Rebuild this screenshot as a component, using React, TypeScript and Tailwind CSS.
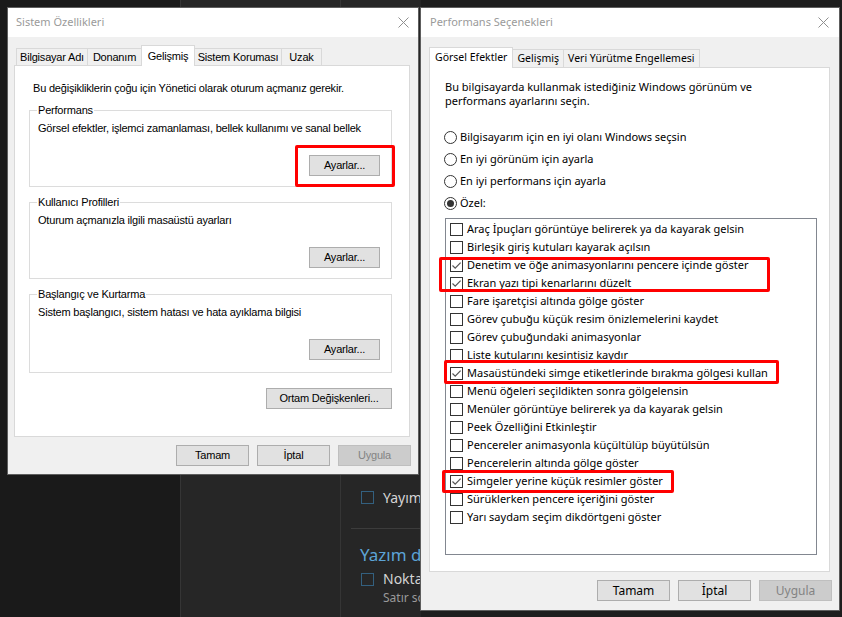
import React from 'react';

const seg = "font-['Noto_Sans',sans-serif]";
const ms = "font-['Liberation_Sans',Arial,sans-serif]";

const visualItems = [
  { label: 'Araç İpuçları görüntüye belirerek ya da kayarak gelsin', on: false },
  { label: 'Birleşik giriş kutuları kayarak açılsın', on: false },
  { label: 'Denetim ve öğe animasyonlarını pencere içinde göster', on: true },
  { label: 'Ekran yazı tipi kenarlarını düzelt', on: true },
  { label: 'Fare işaretçisi altında gölge göster', on: false },
  { label: 'Görev çubuğu küçük resim önizlemelerini kaydet', on: false },
  { label: 'Görev çubuğundaki animasyonlar', on: false },
  { label: 'Liste kutularını kesintisiz kaydır', on: false },
  { label: 'Masaüstündeki simge etiketlerinde bırakma gölgesi kullan', on: true },
  { label: 'Menü öğeleri seçildikten sonra gölgelensin', on: false },
  { label: 'Menüler görüntüye belirerek ya da kayarak gelsin', on: false },
  { label: 'Peek Özelliğini Etkinleştir', on: false },
  { label: 'Pencereler animasyonla küçültülüp büyütülsün', on: false },
  { label: 'Pencerelerin altında gölge göster', on: false },
  { label: 'Simgeler yerine küçük resimler göster', on: true },
  { label: 'Sürüklerken pencere içeriğini göster', on: false },
  { label: 'Yarı saydam seçim dikdörtgeni göster', on: false },
];

const radios = [
  { label: 'Bilgisayarım için en iyi olanı Windows seçsin', on: false },
  { label: 'En iyi görünüm için ayarla', on: false },
  { label: 'En iyi performans için ayarla', on: false },
  { label: 'Özel:', on: true },
];

function CloseX() {
  return (
    <svg width="11" height="11" viewBox="0 0 11 11">
      <path d="M0.5 0.5L10.5 10.5M10.5 0.5L0.5 10.5" stroke="#8f8f8f" strokeWidth="1" />
    </svg>
  );
}

function TitleBar({ title, className }: { title: string; className: string }) {
  return (
    <div className={`flex h-[29px] items-center justify-between bg-white ${className}`}>
      <span className={`${seg} text-[11px] text-[#9a9a9a]`}>{title}</span>
      <CloseX />
    </div>
  );
}

function Btn({ children, disabled, className = '' }: { children: React.ReactNode; disabled?: boolean; className?: string }) {
  return (
    <div
      className={`flex h-[21px] items-center justify-center whitespace-nowrap border ${
        disabled ? 'border-[#bfbfbf] bg-[#cccccc] text-[#838383]' : 'border-[#adadad] bg-[#e1e1e1] text-black'
      } ${className}`}
    >
      {children}
    </div>
  );
}

function Tab({ label, active, className }: { label: string; active?: boolean; className: string }) {
  return (
    <div
      className={`-ml-px flex items-center justify-center whitespace-nowrap border border-b-0 border-[#d9d9d9] first:ml-0 ${
        active ? 'relative z-10 -mb-px bg-white' : 'bg-[#f0f0f0]'
      } ${className}`}
    >
      {label}
    </div>
  );
}

function Group({ legend, desc, h }: { legend: string; desc: string; h: string }) {
  return (
    <div className={`relative flex flex-col border border-[#dcdcdc] ${h}`}>
      <span className="absolute -top-[7px] left-[7px] bg-white px-px leading-[13px]">{legend}</span>
      <div className="pl-[8px] pt-[11px] leading-[13px]">{desc}</div>
      <Btn className="mr-[11px] mt-[20px] w-[71px] self-end">Ayarlar...</Btn>
    </div>
  );
}

function SystemProperties() {
  return (
    <div className="absolute left-[8px] top-[8px] flex h-[466px] w-[410px] flex-col bg-[#f0f0f0] ring-1 ring-[#5e5e5e]">
      <TitleBar title="Sistem Özellikleri" className="pl-[8px] pr-[9px]" />
      <div className={`${ms} text-[11px] tracking-[-0.2px] text-black`}>
        <div className="ml-[6px] mr-[8px] mt-[8px]">
          <div className="flex h-[20px] items-end pl-[2px]">
            <Tab label="Bilgisayar Adı" className="h-[17px] w-[72px]" />
            <Tab label="Donanım" className="h-[17px] w-[55px]" />
            <Tab label="Gelişmiş" active className="h-[21px] w-[54px]" />
            <Tab label="Sistem Koruması" className="h-[17px] w-[88px]" />
            <Tab label="Uzak" className="h-[17px] w-[41px]" />
          </div>
          <div className="flex h-[372px] flex-col border border-[#d9d9d9] bg-white">
            <div className="pl-[18px] pt-[16px] leading-[13px]">
              Bu değişikliklerin çoğu için Yönetici olarak oturum açmanız gerekir.
            </div>
            <div className="ml-[14px] mr-[17px] mt-[15px] flex flex-col gap-[15px]">
              <Group h="h-[77px]" legend="Performans" desc="Görsel efektler, işlemci zamanlaması, bellek kullanımı ve sanal bellek" />
              <Group h="h-[77px]" legend="Kullanıcı Profilleri" desc="Oturum açmanızla ilgili masaüstü ayarları" />
              <Group h="h-[79px]" legend="Başlangıç ve Kurtarma" desc="Sistem başlangıcı, sistem hatası ve hata ayıklama bilgisi" />
              <Btn className="w-[126px] self-end">Ortam Değişkenleri...</Btn>
            </div>
          </div>
        </div>
        <div className="mt-[8px] flex justify-end gap-[8px] pr-[7px]">
          <Btn className="w-[73px]">Tamam</Btn>
          <Btn className="w-[73px]">İptal</Btn>
          <Btn disabled className="w-[73px]">Uygula</Btn>
        </div>
      </div>
    </div>
  );
}

function Radio({ on }: { on: boolean }) {
  return (
    <div className="flex h-[13px] w-[13px] shrink-0 items-center justify-center rounded-full border border-[#333333] bg-white">
      {on && <div className="h-[7px] w-[7px] rounded-full bg-[#333333]" />}
    </div>
  );
}

function Check({ on }: { on: boolean }) {
  return (
    <div className="flex h-[13px] w-[13px] shrink-0 items-center justify-center border border-[#333333] bg-white">
      {on && (
        <svg width="11" height="11" viewBox="0 0 11 11">
          <path d="M1.5 5.5L4.2 8.2L9.6 2.6" fill="none" stroke="#555555" strokeWidth="1.2" />
        </svg>
      )}
    </div>
  );
}

function PerformanceOptions() {
  return (
    <div className="absolute left-[421px] top-[8px] flex h-[602px] w-[418px] flex-col bg-[#f0f0f0] ring-1 ring-[#5e5e5e]">
      <TitleBar title="Performans Seçenekleri" className="pl-[9px] pr-[10px]" />
      <div className={`${seg} text-[11px] text-black`}>
        <div className="ml-[8px] mr-[9px] mt-[10px]">
          <div className="flex h-[20px] items-end text-[10.5px]">
            <Tab label="Görsel Efektler" active className="h-[21px] px-[5px]" />
            <Tab label="Gelişmiş" className="h-[18px] px-[4px]" />
            <Tab label="Veri Yürütme Engellemesi" className="h-[18px] px-[4px]" />
          </div>
          <div className="flex h-[505px] flex-col border border-[#d9d9d9] bg-white">
            <div className="pl-[15px] pt-[12px] leading-[14px]">
              Bu bilgisayarda kullanmak istediğiniz Windows görünüm ve
              <br />
              performans ayarlarını seçin.
            </div>
            <div className="mt-[18px] flex flex-col pl-[14px]">
              {radios.map((r) => (
                <div key={r.label} className="flex h-[22px] items-center gap-[3px]">
                  <Radio on={r.on} />
                  <span>{r.label}</span>
                </div>
              ))}
            </div>
            <div className="ml-[15px] mr-[12px] mt-[4px] h-[337px] border border-[#828790] bg-white pl-[4px] pt-px">
              {visualItems.map((it) => (
                <div key={it.label} className="flex h-[18px] items-center gap-[4px]">
                  <Check on={it.on} />
                  <span>{it.label}</span>
                </div>
              ))}
            </div>
          </div>
        </div>
        <div className="mt-[8px] flex justify-end gap-[8px] pr-[7px] text-[12px]">
          <Btn className="w-[73px]">Tamam</Btn>
          <Btn className="w-[73px]">İptal</Btn>
          <Btn disabled className="w-[73px]">Uygula</Btn>
        </div>
      </div>
    </div>
  );
}

function DarkCheck() {
  return <div className="h-[13px] w-[13px] shrink-0 border-[1.5px] border-[#33607f]" />;
}

function Backdrop() {
  return (
    <div className={`${seg} flex h-full w-full`}>
      <div className="w-[180px] bg-[#1a1a1a]" />
      <div className="w-[160px] border-l border-[#353535] bg-[#262626]" />
      <div className="flex w-[81px] flex-col border-l border-[#353535] bg-[#262626] pt-[487px]">
        <div className="flex items-center gap-[9px] pl-[20px]">
          <DarkCheck />
          <span className="whitespace-nowrap text-[14px] text-[#d4d4d4]">Yayım</span>
        </div>
        <div className="ml-[10px] mt-[20px] border-t border-[#3c3c3c]" />
        <div className="mt-[14px] whitespace-nowrap pl-[19px] text-[17px] leading-[24px] text-[#5ca3d6]">Yazım de</div>
        <div className="mt-[2px] flex items-center gap-[9px] pl-[20px]">
          <DarkCheck />
          <span className="whitespace-nowrap text-[14px] leading-[20px] text-[#d4d4d4]">Nokta</span>
        </div>
        <div className="whitespace-nowrap pl-[42px] text-[12px] leading-[18px] text-[#9a9a9a]">Satır so</div>
      </div>
      <div className="flex-1 bg-[#1e1e1e]" />
    </div>
  );
}

export default function App() {
  return (
    <div className="relative h-[617px] w-[842px] overflow-hidden bg-[#1a1a1a]">
      <Backdrop />
      <SystemProperties />
      <PerformanceOptions />
      <div className="absolute left-[295px] top-[145px] h-[42px] w-[100px] rounded-[2px] border-[3px] border-[#ff0000]" />
      <div className="absolute left-[439px] top-[257px] h-[35px] w-[331px] rounded-[2px] border-[3px] border-[#ff0000]" />
      <div className="absolute left-[444px] top-[360px] h-[24px] w-[335px] rounded-[2px] border-[3px] border-[#ff0000]" />
      <div className="absolute left-[442px] top-[470px] h-[23px] w-[232px] rounded-[2px] border-[3px] border-[#ff0000]" />
    </div>
  );
}
